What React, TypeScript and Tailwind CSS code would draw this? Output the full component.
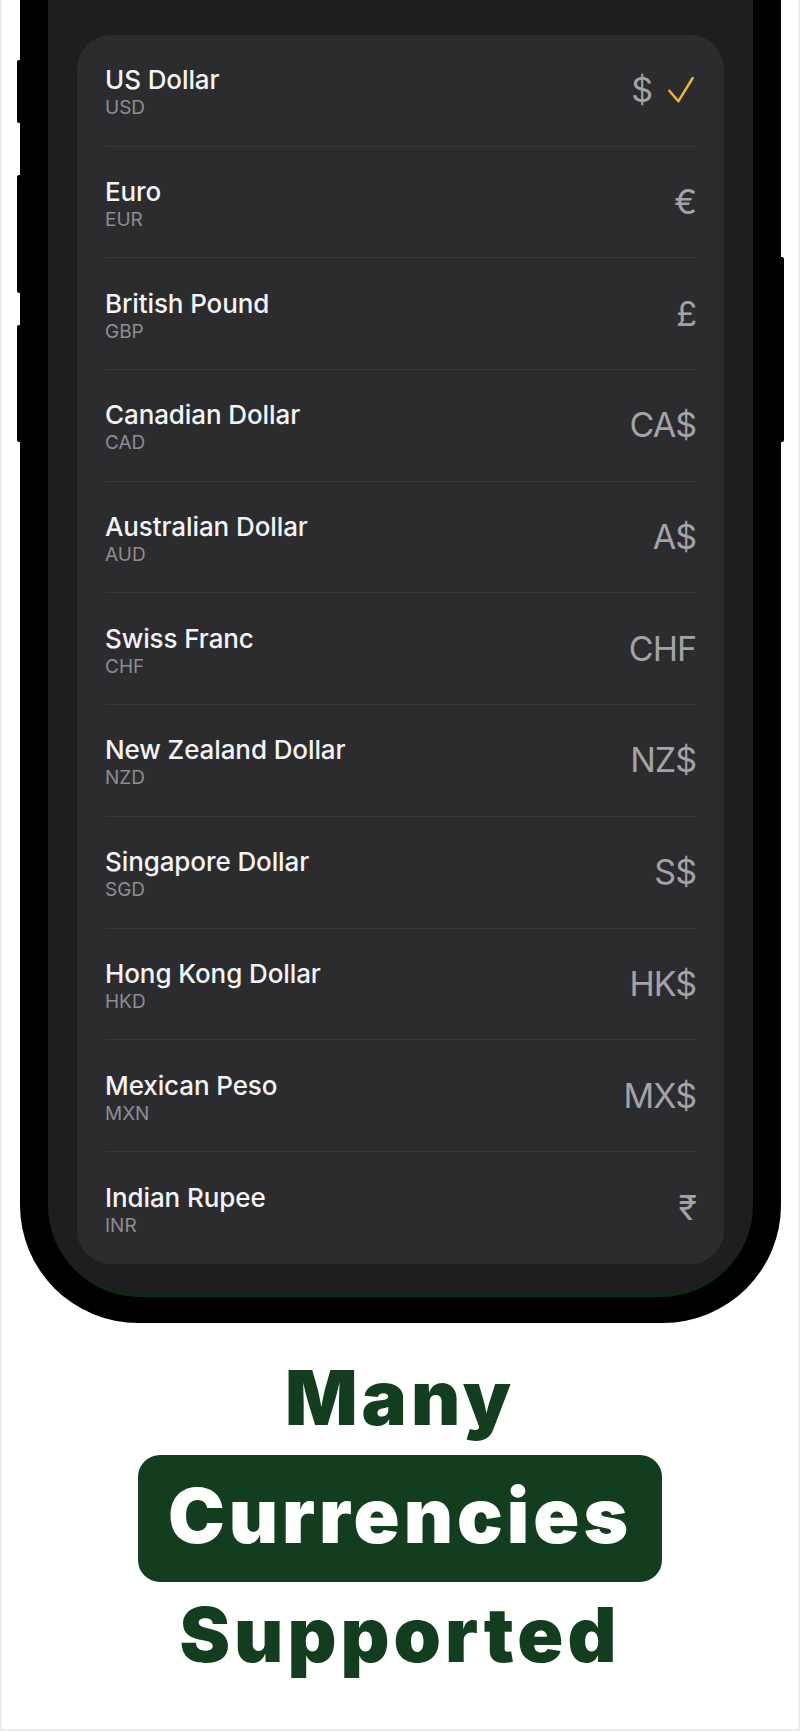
const currencies = [
  { name: 'US Dollar', code: 'USD', symbol: '$', selected: true },
  { name: 'Euro', code: 'EUR', symbol: '€' },
  { name: 'British Pound', code: 'GBP', symbol: '£' },
  { name: 'Canadian Dollar', code: 'CAD', symbol: 'CA$' },
  { name: 'Australian Dollar', code: 'AUD', symbol: 'A$' },
  { name: 'Swiss Franc', code: 'CHF', symbol: 'CHF' },
  { name: 'New Zealand Dollar', code: 'NZD', symbol: 'NZ$' },
  { name: 'Singapore Dollar', code: 'SGD', symbol: 'S$' },
  { name: 'Hong Kong Dollar', code: 'HKD', symbol: 'HK$' },
  { name: 'Mexican Peso', code: 'MXN', symbol: 'MX$' },
  { name: 'Indian Rupee', code: 'INR', symbol: '₹' },
];

const Check = () => (
  <svg width="28" height="28" viewBox="0 0 28 28" fill="none" className="ml-[15px] mr-[1px]">
    <polyline
      points="2.3,14.7 11.3,25.3 25.7,2"
      stroke="#f4b731"
      strokeWidth="2.4"
      strokeLinecap="round"
      strokeLinejoin="round"
    />
  </svg>
);

const App = () => {
  return (
    <div className="w-[800px] h-[1731px] bg-white overflow-hidden border-l-2 border-r-2 border-b-2 border-[#ececec] font-['Inter',sans-serif]">
      {/* Phone */}
      <div className="relative ml-[18px] w-[761px] h-[1323px] bg-black rounded-b-[118px] px-[28px] pb-[26px]">
        {/* side buttons */}
        <div className="absolute left-[-3px] top-[60px] w-[4px] h-[63px] bg-black rounded-l-[2px]" />
        <div className="absolute left-[-3px] top-[175px] w-[4px] h-[118px] bg-black rounded-l-[2px]" />
        <div className="absolute left-[-3px] top-[325px] w-[4px] h-[117px] bg-black rounded-l-[2px]" />
        <div className="absolute right-[-3px] top-[257px] w-[4px] h-[185px] bg-black rounded-r-[2px]" />

        {/* Screen */}
        <div className="h-full bg-[#1e1e20] rounded-b-[92px] pt-[35px] px-[29px] border-b-[3px] border-[#0f2a16]">
          <div className="bg-[#2c2c2e] rounded-[34px] flex flex-col">
            {currencies.map((c, i) => (
              <div key={c.code} className="h-[111.7px] px-[28px] flex flex-col">
                <div
                  className={`flex-1 flex items-center justify-between ${
                    i < currencies.length - 1 ? 'border-b-[1.5px] border-[#3b3b3e]' : ''
                  }`}
                >
                  <div className="flex flex-col pt-[4px]">
                    <span className="text-[26px] leading-[31px] font-medium text-[#f4f4f6] tracking-[-0.1px]">{c.name}</span>
                    <span className="text-[19px] leading-[25px] text-[#8d8d92]">{c.code}</span>
                  </div>
                  <div className="flex items-center">
                    <span className="text-[34px] leading-[40px] text-[#a2a2a7] tracking-[-1px]">{c.symbol}</span>
                    {c.selected && <Check />}
                  </div>
                </div>
              </div>
            ))}
          </div>
        </div>
      </div>

      {/* Caption */}
      <div className="flex flex-col items-center mt-[36px] font-black">
        <div className="text-[76px] leading-[76px] text-[#133d1f] tracking-[4px]">Many</div>
        <div className="mt-[20px] w-[524px] h-[127px] bg-[#133d1f] rounded-[22px] flex justify-center pt-[22px]">
          <span className="text-[76px] leading-[76px] text-white tracking-[4px]">Currencies</span>
        </div>
        <div className="mt-[14px] text-[76px] leading-[76px] text-[#133d1f] tracking-[4px]">Supported</div>
      </div>
    </div>
  );
};

export default App;
